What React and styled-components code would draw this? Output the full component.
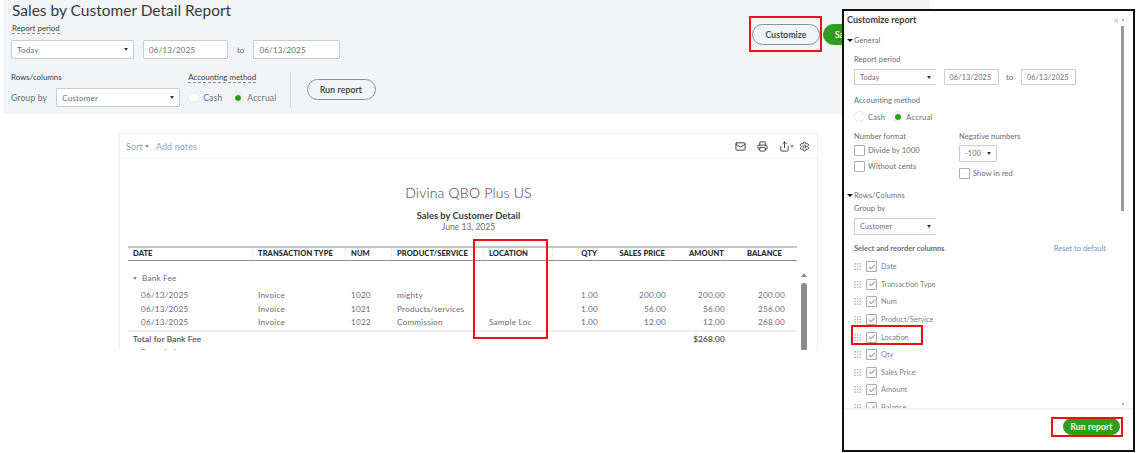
import React from "react";
import styled, { createGlobalStyle } from "styled-components";
import { Mail, Printer, Share, Settings, Grip, Check } from "lucide-react";

const GlobalStyle = createGlobalStyle`
  html, body { margin: 0; padding: 0; background: #fff; }
  * { box-sizing: border-box; }
`;

const Page = styled.div`
  position: relative;
  width: 1144px;
  height: 453px;
  overflow: hidden;
  background: #fff;
  color: #6b6c72;
  font-family: Lato, "Open Sans", sans-serif;
  font-size: 8px;
`;

const Band = styled.header`
  display: flex;
  justify-content: space-between;
  width: 927px;
  height: 114px;
  margin-left: 3px;
  padding: 0 0 0 8px;
  background: #f3f4f7;
`;

const Title = styled.h1`
  margin: 0 0 0 1px;
  padding-top: 1px;
  height: 23px;
  font-size: 15.5px;
  line-height: 18px;
  font-weight: 400;
  color: #393a3d;
`;

const LabelLine = styled.div`
  display: flex;
  padding-left: ${(p) => p.$pl || 0}px;
`;

const DashLabel = styled.span`
  font-size: 7.9px;
  line-height: 10px;
  color: #393a3d;
  border-bottom: 1px dashed #8d9096;
`;

const PlainLabel = styled.div`
  font-size: 7.9px;
  line-height: 10px;
  color: #393a3d;
`;

const ControlRow = styled.div`
  display: flex;
  align-items: center;
  gap: ${(p) => p.$gap || 9}px;
  min-height: ${(p) => p.$h || 0}px;
  margin-top: ${(p) => p.$mt || 0}px;
`;

const Field = styled.div`
  display: flex;
  align-items: center;
  justify-content: space-between;
  flex: none;
  width: ${(p) => p.$w}px;
  height: ${(p) => p.$h || 19}px;
  margin-top: ${(p) => p.$mt || 0}px;
  padding: 0 5px;
  background: #fff;
  border: 1px solid #c9ccd1;
  border-radius: 1px;
  font-size: ${(p) => p.$fs || 8}px;
  letter-spacing: 0.2px;
  color: #6b6c72;
`;

const Caret = styled.span`
  flex: none;
  width: 0;
  height: 0;
  border-left: ${(p) => p.$s || 2.5}px solid transparent;
  border-right: ${(p) => p.$s || 2.5}px solid transparent;
  border-top: ${(p) => (p.$s ? p.$s + 0.5 : 3)}px solid ${(p) => p.$color || "#393a3d"};
`;

const TextBit = styled.span`
  font-size: ${(p) => p.$fs || 8.5}px;
  color: #6b6c72;
  letter-spacing: 0.2px;
`;

const Radio = styled.span`
  display: inline-flex;
  align-items: center;
  justify-content: center;
  flex: none;
  width: 11px;
  height: 11px;
  border-radius: 50%;
  background: #fff;
  border: 1px solid #e4e5e8;
  &::after {
    content: "";
    width: 6px;
    height: 6px;
    border-radius: 50%;
    background: ${(p) => (p.$on ? "#2ca01c" : "transparent")};
  }
`;

const RadioItem = styled.label`
  display: flex;
  align-items: center;
  gap: ${(p) => p.$gap || 4}px;
`;

const Divider = styled.div`
  flex: none;
  width: 1px;
  height: 36px;
  background: #d4d7dc;
  margin: 0 16px 0 13px;
`;

const Pill = styled.button`
  flex: none;
  width: ${(p) => p.$w}px;
  height: ${(p) => p.$h || 21}px;
  margin-top: ${(p) => p.$mt || 0}px;
  padding: 0;
  border-radius: 11px;
  border: 1px solid ${(p) => (p.$green ? "#2ca01c" : "#8d9096")};
  background: ${(p) => (p.$green ? "#2ca01c" : "transparent")};
  color: ${(p) => (p.$green ? "#fff" : "#393a3d")};
  font-family: inherit;
  font-size: 8.5px;
  letter-spacing: 0.2px;
  -webkit-text-stroke: 0.2px currentColor;
`;

const SavePill = styled(Pill)`
  text-align: left;
  padding-left: 11px;
`;

const FilterGrid = styled.div`
  display: flex;
  flex-direction: column;
`;

const LowerRow = styled.div`
  display: flex;
  align-items: flex-start;
  margin-top: 13px;
`;

const LowerCol = styled.div`
  display: flex;
  flex-direction: column;
  gap: ${(p) => p.$gap || 6}px;
  margin-left: ${(p) => p.$ml || 0}px;
`;

const Actions = styled.div`
  display: flex;
  gap: 3px;
  padding-top: 24px;
  width: 178px;
  overflow: hidden;
`;

const Card = styled.section`
  width: 699px;
  height: 217px;
  margin: 19px 0 0 119px;
  border: 1px solid #eceef1;
  border-bottom: 0;
  overflow: hidden;
`;

const CardBar = styled.div`
  display: flex;
  align-items: center;
  justify-content: space-between;
  height: 25px;
  padding: 0 7px 0 6px;
  border-bottom: 1px solid #eceef1;
`;

const BarLinks = styled.div`
  display: flex;
  align-items: center;
  gap: 7px;
  font-size: 8.8px;
  color: #8ea3bf;
  letter-spacing: 0.2px;
`;

const SortLink = styled.span`
  display: flex;
  align-items: center;
  gap: 2px;
`;

const BarIcons = styled.div`
  display: flex;
  align-items: center;
  gap: 11px;
  color: #393a3d;
`;

const ExportIcon = styled.span`
  display: flex;
  align-items: center;
  margin-right: -6px;
`;

const ReportHead = styled.div`
  padding-top: 25px;
  text-align: center;
`;

const Company = styled.div`
  font-size: 14px;
  line-height: 18px;
  font-weight: 300;
  color: #393a3d;
  letter-spacing: 0.2px;
`;

const ReportName = styled.div`
  margin-top: 7.5px;
  font-size: 9.4px;
  line-height: 11px;
  font-weight: 700;
  color: #393a3d;
`;

const ReportDate = styled.div`
  font-size: 8.5px;
  line-height: 13px;
  color: #6b6c72;
`;

const TableArea = styled.div`
  display: flex;
  gap: 4px;
  margin: 12px 0 0 8px;
`;

const Table = styled.div`
  width: 669px;
`;

const columns = "125px 93px 46px 92px 69px 45px 68px 59px 72px";

const HeadRow = styled.div`
  display: grid;
  grid-template-columns: ${columns};
  height: 15px;
  border-top: 2px solid #c4c6ca;
  border-bottom: 1px solid #8d9096;
`;

const HeadCell = styled.div`
  display: flex;
  align-items: center;
  justify-content: ${(p) => (p.$right ? "flex-end" : "flex-start")};
  padding-left: ${(p) => (p.$right ? 0 : 5)}px;
  padding-right: ${(p) => p.$pr || 0}px;
  font-size: 7.5px;
  font-weight: 900;
  letter-spacing: 0.1px;
  color: #24262a;
  border-right: 1px dotted ${(p) => (p.$last ? "transparent" : "#e3e5e8")};
`;

const GroupRow = styled.div`
  display: flex;
  align-items: center;
  gap: 5px;
  height: 13px;
  margin-top: 11px;
  padding-left: 5px;
  font-size: 8.2px;
  letter-spacing: 0.2px;
`;

const GroupRows = styled.div`
  margin-top: 4px;
`;

const Row = styled.div`
  display: grid;
  grid-template-columns: ${columns};
  height: 13.5px;
  align-items: center;
  font-size: 8.2px;
  letter-spacing: 0.2px;
`;

const Cell = styled.div`
  padding-left: ${(p) => (p.$right ? 0 : p.$pl ?? 5)}px;
  padding-right: ${(p) => p.$pr || 0}px;
  text-align: ${(p) => (p.$right ? "right" : "left")};
  white-space: nowrap;
`;

const TotalRow = styled(Row)`
  margin-top: 1px;
  border-top: 2px solid #eceef1;
  height: 16px;
  font-size: 8.2px;
  color: #4a4c50;
  -webkit-text-stroke: 0.15px currentColor;
`;

const TotalLabel = styled(Cell)`
  grid-column: 1 / span 7;
`;

const ClippedRow = styled.div`
  padding-left: 12px;
  line-height: 12px;
  letter-spacing: 0.2px;
  font-size: 8.2px;
`;

const Rail = styled.div`
  display: flex;
  flex-direction: column;
  align-items: center;
  width: 6px;
  padding-top: 27px;
  gap: 6px;
`;

const RailArrow = styled.span`
  flex: none;
  width: 0;
  height: 0;
  border-left: 3px solid transparent;
  border-right: 3px solid transparent;
  border-bottom: 4px solid #8c8c8c;
`;

const RailThumb = styled.span`
  flex: none;
  width: 6px;
  height: 70px;
  border-radius: 3px 3px 0 0;
  background: #8c8c8c;
`;

/* the customize window sits over the page */
const Panel = styled.aside`
  position: absolute;
  left: 842px;
  top: 9px;
  width: 293px;
  height: 443px;
  display: flex;
  flex-direction: column;
  background: #fff;
  border: 2px solid #111;
`;

const PanelTop = styled.div`
  display: flex;
  align-items: center;
  justify-content: space-between;
  flex: none;
  height: 15px;
  padding: 2px 9px 0 3px;
  font-size: 9px;
  font-weight: 700;
  color: #393a3d;
`;

const PanelClose = styled.span`
  display: flex;
  align-items: center;
  gap: 3px;
  font-size: 10px;
  font-weight: 400;
  color: #b5b7bb;
`;

const TinyArrow = styled.span`
  flex: none;
  width: 0;
  height: 0;
  border-left: 1.5px solid transparent;
  border-right: 1.5px solid transparent;
  border-bottom: 3px solid #8c8c8c;
`;

const PanelBody = styled.div`
  position: relative;
  flex: 1;
  min-height: 0;
  overflow: hidden;
  padding: 0 0 0 3px;
`;

const SectionHead = styled.div`
  display: flex;
  align-items: center;
  gap: 1px;
  height: 11px;
  margin-top: ${(p) => p.$mt || 0}px;
  font-size: 7.4px;
  letter-spacing: 0.15px;
  color: #6b6c72;
`;

const Indent = styled.div`
  padding-left: 7px;
`;

const SubLabel = styled.div`
  font-size: 7.6px;
  line-height: 11px;
  letter-spacing: 0.05px;
  color: #6b6c72;
  margin-top: ${(p) => p.$mt || 0}px;
`;

const SplitField = styled(Field)`
  border-right: 0;
`;

const ToText = styled.span`
  font-size: 8px;
  color: #6b6c72;
`;

const FormatGrid = styled.div`
  display: flex;
  margin-top: 9px;
`;

const FormatCol = styled.div`
  width: ${(p) => p.$w}px;
  display: flex;
  flex-direction: column;
`;

const BoxRow = styled.div`
  display: flex;
  align-items: center;
  gap: 3px;
  height: 16px;
  margin-top: ${(p) => p.$mt || 0}px;
  font-size: 7.6px;
  color: #6b6c72;
  letter-spacing: 0.05px;
`;

const Box = styled.span`
  display: inline-flex;
  align-items: center;
  justify-content: center;
  flex: none;
  width: 11px;
  height: 11px;
  background: #fff;
  border: 1px solid #a9acb2;
  border-radius: 1px;
  color: #2ca01c;
`;

const ColumnsHead = styled.div`
  display: flex;
  justify-content: space-between;
  width: 252px;
  margin-top: 9px;
  font-size: 7.5px;
  line-height: 10px;
  font-weight: 700;
  color: #6b6c72;
`;

const ResetLink = styled.span`
  font-weight: 400;
  color: #6d8fd6;
`;

const ColumnList = styled.div`
  margin-top: 4px;
`;

const ColumnItem = styled.div`
  display: flex;
  align-items: center;
  gap: 4px;
  height: 17.6px;
  font-size: 7.4px;
  color: #7d8086;
`;

const ColumnGrip = styled(Grip)`
  flex: none;
  margin-left: -1px;
  color: #a9acb2;
`;

const PanelScroll = styled.div`
  position: absolute;
  top: 0;
  right: 9px;
  width: 3px;
  height: 185px;
  background: #9a9a9a;
`;

const PanelScrollDown = styled.span`
  position: absolute;
  bottom: 2px;
  right: 9px;
  width: 0;
  height: 0;
  border-left: 1.5px solid transparent;
  border-right: 1.5px solid transparent;
  border-top: 3px solid #8c8c8c;
`;

const PanelFoot = styled.div`
  display: flex;
  justify-content: flex-end;
  align-items: center;
  flex: none;
  height: 42px;
  padding: 0 13px 6px 0;
  border-top: 1px solid #eceef1;
`;

/* red annotation boxes drawn on top of the screenshot */
const Mark = styled.div`
  position: absolute;
  left: ${(p) => p.$x}px;
  top: ${(p) => p.$y}px;
  width: ${(p) => p.$w}px;
  height: ${(p) => p.$h}px;
  border: 2px solid #ee1111;
  pointer-events: none;
`;

const rows = [
  ["06/13/2025", "Invoice", "1020", "mighty", "", "1.00", "200.00", "200.00", "200.00"],
  ["06/13/2025", "Invoice", "1021", "Products/services", "", "1.00", "56.00", "56.00", "256.00"],
  ["06/13/2025", "Invoice", "1022", "Commission", "Sample Loc", "1.00", "12.00", "12.00", "268.00"],
];

const columnNames = [
  "Date",
  "Transaction Type",
  "Num",
  "Product/Service",
  "Location",
  "Qty",
  "Sales Price",
  "Amount",
  "Balance",
];

function ReportTable() {
  return (
    <Table>
      <HeadRow>
        <HeadCell>DATE</HeadCell>
        <HeadCell>TRANSACTION TYPE</HeadCell>
        <HeadCell>NUM</HeadCell>
        <HeadCell>PRODUCT/SERVICE</HeadCell>
        <HeadCell>LOCATION</HeadCell>
        <HeadCell $right>QTY</HeadCell>
        <HeadCell $right>SALES PRICE</HeadCell>
        <HeadCell $right>AMOUNT</HeadCell>
        <HeadCell $right $last $pr={14}>BALANCE</HeadCell>
      </HeadRow>
      <GroupRow>
        <Caret $color="#8d9096" />
        Bank Fee
      </GroupRow>
      <GroupRows>
        {rows.map((r) => (
          <Row key={r[2]}>
            <Cell $pl={13}>{r[0]}</Cell>
            <Cell>{r[1]}</Cell>
            <Cell>{r[2]}</Cell>
            <Cell>{r[3]}</Cell>
            <Cell>{r[4]}</Cell>
            <Cell $right>{r[5]}</Cell>
            <Cell $right>{r[6]}</Cell>
            <Cell $right>{r[7]}</Cell>
            <Cell $right $pr={12}>{r[8]}</Cell>
          </Row>
        ))}
      </GroupRows>
      <TotalRow>
        <TotalLabel>Total for Bank Fee</TotalLabel>
        <Cell $right>$268.00</Cell>
      </TotalRow>
      <ClippedRow>Commission</ClippedRow>
    </Table>
  );
}

function CustomizePanel() {
  return (
    <Panel>
      <PanelTop>
        Customize report
        <PanelClose>×<TinyArrow /></PanelClose>
      </PanelTop>
      <PanelBody>
        <SectionHead $mt={9}>
          <Caret $s={3} $color="#111" />
          General
        </SectionHead>
        <Indent>
          <SubLabel $mt={8}>Report period</SubLabel>
          <ControlRow $gap={7.5} $mt={4}>
            <SplitField $w={82} $h={16} $fs={7.2}>
              Today
              <Caret />
            </SplitField>
            <Field $w={55} $h={16} $fs={7.2}>06/13/2025</Field>
            <ToText>to</ToText>
            <Field $w={55} $h={16} $fs={7.2}>06/13/2025</Field>
          </ControlRow>
          <SubLabel $mt={10}>Accounting method</SubLabel>
          <ControlRow $gap={7} $mt={5}>
            <RadioItem $gap={3}><Radio /><TextBit $fs={7.6}>Cash</TextBit></RadioItem>
            <RadioItem $gap={3}><Radio $on /><TextBit $fs={7.6}>Accrual</TextBit></RadioItem>
          </ControlRow>
          <FormatGrid>
            <FormatCol $w={105}>
              <SubLabel>Number format</SubLabel>
              <BoxRow><Box />Divide by 1000</BoxRow>
              <BoxRow><Box />Without cents</BoxRow>
            </FormatCol>
            <FormatCol $w={120}>
              <SubLabel>Negative numbers</SubLabel>
              <Field $w={38} $h={17} $mt={3} $fs={7.2}>
                -100
                <Caret />
              </Field>
              <BoxRow $mt={3}><Box />Show in red</BoxRow>
            </FormatCol>
          </FormatGrid>
        </Indent>
        <SectionHead $mt={9}>
          <Caret $s={3} $color="#111" />
          Rows/Columns
        </SectionHead>
        <Indent>
          <SubLabel $mt={2}>Group by</SubLabel>
          <SplitField $w={82} $h={17} $mt={4} $fs={7.2}>
            Customer
            <Caret />
          </SplitField>
          <ColumnsHead>
            Select and reorder columns
            <ResetLink>Reset to default</ResetLink>
          </ColumnsHead>
          <ColumnList>
            {columnNames.map((name) => (
              <ColumnItem key={name}>
                <ColumnGrip size={9} strokeWidth={2} />
                <Box>
                  <Check size={8} strokeWidth={3} />
                </Box>
                {name}
              </ColumnItem>
            ))}
          </ColumnList>
        </Indent>
        <PanelScroll />
        <PanelScrollDown />
      </PanelBody>
      <PanelFoot>
        <Pill $green $w={57} $h={17}>Run report</Pill>
      </PanelFoot>
    </Panel>
  );
}

export default function App() {
  return (
    <Page>
      <GlobalStyle />
      <Band>
        <FilterGrid>
          <Title>Sales by Customer Detail Report</Title>
          <LabelLine $pl={1}>
            <DashLabel>Report period</DashLabel>
          </LabelLine>
          <ControlRow $mt={6}>
            <Field $w={123}>
              Today
              <Caret />
            </Field>
            <Field $w={85}>06/13/2025</Field>
            <ToText>to</ToText>
            <Field $w={87}>06/13/2025</Field>
          </ControlRow>
          <LowerRow>
            <LowerCol>
              <PlainLabel>Rows/columns</PlainLabel>
              <ControlRow>
                <TextBit>Group by</TextBit>
                <Field $w={124}>
                  Customer
                  <Caret />
                </Field>
              </ControlRow>
            </LowerCol>
            <LowerCol $gap={5} $ml={8}>
              <LabelLine><DashLabel>Accounting method</DashLabel></LabelLine>
              <ControlRow $gap={10} $h={19}>
                <RadioItem><Radio /><TextBit>Cash</TextBit></RadioItem>
                <RadioItem><Radio $on /><TextBit>Accrual</TextBit></RadioItem>
              </ControlRow>
            </LowerCol>
            <Divider />
            <Pill $w={69} $mt={7}>Run report</Pill>
          </LowerRow>
        </FilterGrid>
        <Actions>
          <Pill $w={68}>Customize</Pill>
          <SavePill $green $w={60}>Save</SavePill>
        </Actions>
      </Band>
      <Card>
        <CardBar>
          <BarLinks>
            <SortLink>Sort<Caret $color="#6d8fd6" /></SortLink>
            <span>Add notes</span>
          </BarLinks>
          <BarIcons>
            <Mail size={11} />
            <Printer size={11} />
            <ExportIcon>
              <Share size={11} />
              <Caret $color="#6d8fd6" />
            </ExportIcon>
            <Settings size={11} />
          </BarIcons>
        </CardBar>
        <ReportHead>
          <Company>Divina QBO Plus US</Company>
          <ReportName>Sales by Customer Detail</ReportName>
          <ReportDate>June 13, 2025</ReportDate>
        </ReportHead>
        <TableArea>
          <ReportTable />
          <Rail>
            <RailArrow />
            <RailThumb />
          </Rail>
        </TableArea>
      </Card>
      <CustomizePanel />
      <Mark $x={749} $y={16} $w={73} $h={36} />
      <Mark $x={473} $y={239} $w={75} $h={100} />
      <Mark $x={851} $y={325} $w={72} $h={20} />
      <Mark $x={1051} $y={417} $w={72} $h={20} />
    </Page>
  );
}
